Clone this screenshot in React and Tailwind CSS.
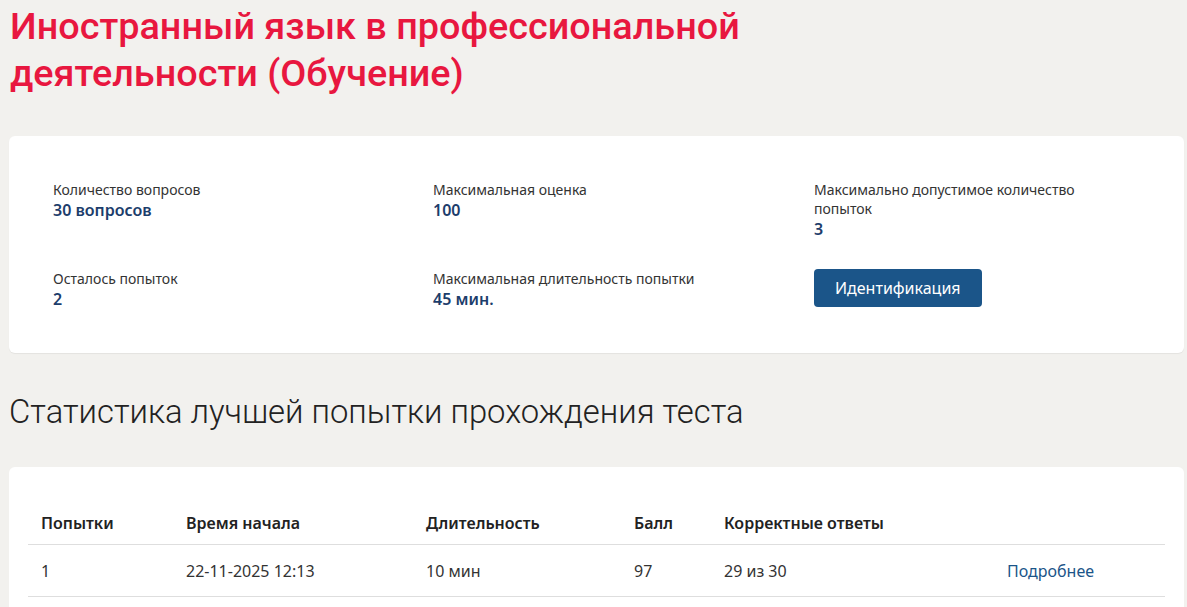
import React from "react"

const info = [
  { label: "Количество вопросов", value: "30 вопросов" },
  { label: "Максимальная оценка", value: "100" },
  { label: "Максимально допустимое количество попыток", value: "3" },
  { label: "Осталось попыток", value: "2" },
  { label: "Максимальная длительность попытки", value: "45 мин." },
]

const attempts = [
  { n: "1", start: "22-11-2025 12:13", dur: "10 мин", score: "97", correct: "29 из 30" },
]

function InfoItem({ label, value }) {
  return (
    <div>
      <div className="text-[14px] leading-[19px] text-[#333333] max-w-[280px]">{label}</div>
      <div className="mt-px text-[16px] leading-[21px] font-semibold text-[#1c3d6b]">{value}</div>
    </div>
  )
}

export default function App() {
  return (
    <div className="min-h-screen bg-[#f2f1ee] pl-[9px] pr-[3px] pt-[3px] pb-10 font-['Noto_Sans',sans-serif]">
      <h1 className="font-['Roboto',sans-serif] font-medium text-[37.8px] leading-[47px] text-[#e8173f] max-w-[780px] pl-px">
        Иностранный язык в профессиональной деятельности (Обучение)
      </h1>

      <div className="mt-[39px] bg-white rounded-md shadow-[0_1px_1px_rgba(0,0,0,0.06)] pl-[44px] pt-[44px] pb-[43px]">
        <div className="grid grid-cols-[380px_381px_1fr] gap-y-[29px]">
          {info.slice(0, 3).map((i) => (
            <InfoItem key={i.label} {...i} />
          ))}
          {info.slice(3).map((i) => (
            <InfoItem key={i.label} {...i} />
          ))}
          <div>
            <button className="h-[38px] px-[21px] rounded-[4px] bg-[#1b5589] text-white text-[16px]">
              Идентификация
            </button>
          </div>
        </div>
      </div>

      <h2 className="mt-[39px] font-['Roboto',sans-serif] font-light text-[32.8px] leading-[40px] text-[#222222]">
        Статистика лучшей попытки прохождения теста
      </h2>

      <div className="mt-[35px] bg-white rounded-md pt-[35px] pl-[19px] pr-[19px] pb-6">
        <table className="w-full text-[16px] text-[#333333]">
          <thead>
            <tr className="border-b border-[#dedede]">
              <th className="w-[145px] text-left font-semibold text-[#222222] pl-[13px] pt-[9px] pb-[9px]">Попытки</th>
              <th className="w-[240px] text-left font-semibold text-[#222222] pl-[13px] pt-[9px] pb-[9px]">Время начала</th>
              <th className="w-[208px] text-left font-semibold text-[#222222] pl-[13px] pt-[9px] pb-[9px]">Длительность</th>
              <th className="w-[90px] text-left font-semibold text-[#222222] pl-[13px] pt-[9px] pb-[9px]">Балл</th>
              <th className="w-[283px] text-left font-semibold text-[#222222] pl-[13px] pt-[9px] pb-[9px]">Корректные ответы</th>
              <th className="text-left pl-[13px] pt-[9px] pb-[9px]"></th>
            </tr>
          </thead>
          <tbody>
            {attempts.map((a) => (
              <tr key={a.n} className="border-b border-[#dedede]">
                <td className="pl-[13px] pt-[14px] pb-[13px]">{a.n}</td>
                <td className="pl-[13px] pt-[14px] pb-[13px]">{a.start}</td>
                <td className="pl-[13px] pt-[14px] pb-[13px]">{a.dur}</td>
                <td className="pl-[13px] pt-[14px] pb-[13px]">{a.score}</td>
                <td className="pl-[13px] pt-[14px] pb-[13px]">{a.correct}</td>
                <td className="pl-[13px] pt-[14px] pb-[13px]">
                  <a href="#" className="text-[#1b5589]">Подробнее</a>
                </td>
              </tr>
            ))}
          </tbody>
        </table>
      </div>
    </div>
  )
}
